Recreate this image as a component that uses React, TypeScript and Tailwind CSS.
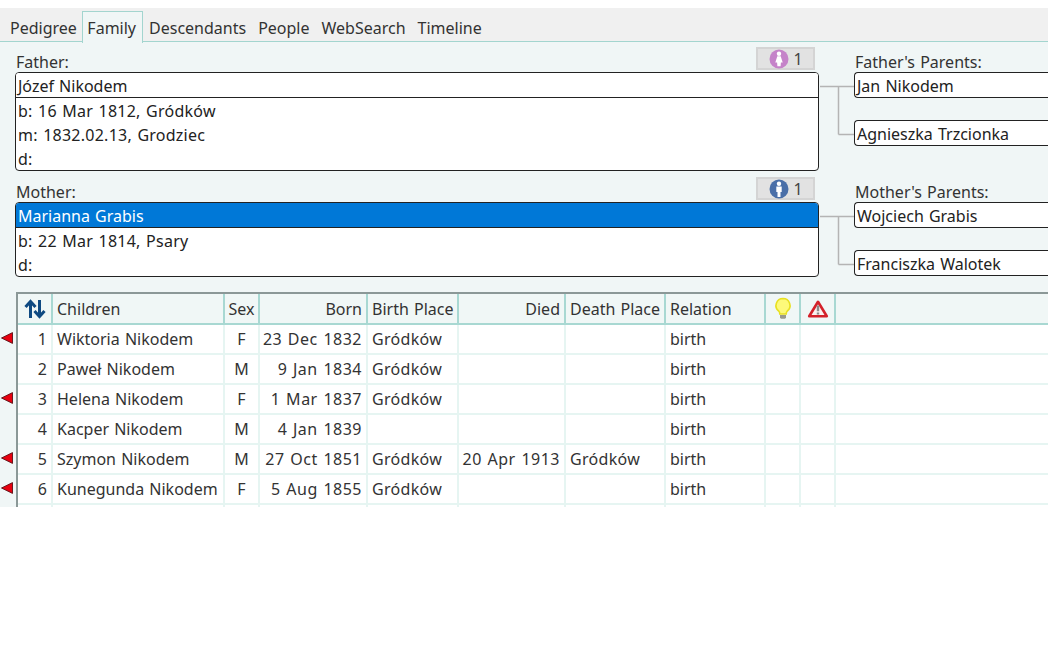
const tabs = ["Pedigree", "Family", "Descendants", "People", "WebSearch", "Timeline"];

const columns = [
  { label: "Children", w: "w-[172px]", align: "text-left", cell: "" },
  { label: "Sex", w: "w-[35px]", align: "text-center", cell: "" },
  { label: "Born", w: "w-[108px]", align: "text-right", cell: "tracking-[0.5px]" },
  { label: "Birth Place", w: "w-[91px]", align: "text-left", cell: "tracking-[0.3px]" },
  { label: "Died", w: "w-[107px]", align: "text-right", cell: "tracking-[0.5px]" },
  { label: "Death Place", w: "w-[100px]", align: "text-left", cell: "tracking-[0.3px]" },
  { label: "Relation", w: "w-[100px]", align: "text-left", cell: "" },
];

const rows = [
  { n: 1, flag: true, cells: ["Wiktoria Nikodem", "F", "23 Dec 1832", "Gródków", "", "", "birth"] },
  { n: 2, flag: false, cells: ["Paweł Nikodem", "M", "9 Jan 1834", "Gródków", "", "", "birth"] },
  { n: 3, flag: true, cells: ["Helena Nikodem", "F", "1 Mar 1837", "Gródków", "", "", "birth"] },
  { n: 4, flag: false, cells: ["Kacper Nikodem", "M", "4 Jan 1839", "", "", "", "birth"] },
  { n: 5, flag: true, cells: ["Szymon Nikodem", "M", "27 Oct 1851", "Gródków", "20 Apr 1913", "Gródków", "birth"] },
  { n: 6, flag: true, cells: ["Kunegunda Nikodem", "F", "5 Aug 1855", "Gródków", "", "", "birth"] },
  { n: 0, flag: false, cells: ["", "", "", "", "", "", ""] },
];

function Person({ color }: { color: string }) {
  return (
    <svg width="20" height="20" viewBox="0 0 20 20">
      <circle cx="10" cy="10" r="9.5" fill={color} />
      <circle cx="10" cy="4.8" r="2.200" fill="#fff" />
      {color === "#c583c9" ? (
        <path d="M8.300 7.200h3.400l2 6.300h-1.800l-.3 3.800H8.400l-.3-3.800H6.300z" fill="#fff" />
      ) : (
        <path d="M7.300 7.400h5.400v5.600h-1.200v5H8.500v-5H7.300z" fill="#fff" />
      )}
    </svg>
  );
}

function Badge({ color }: { color: string }) {
  return (
    <div className="flex h-[23px] w-[59px] -translate-x-px items-center justify-center gap-[5px] border-2 border-[#d4d4d4] bg-[#e2e2e2] text-[#444]">
      <Person color={color} />
      <span className="w-[9px]">1</span>
    </div>
  );
}

function Connector({ h }: { h: number }) {
  return (
    <svg width="36" height={h + 16} className="mt-[6px] shrink-0">
      <path d={`M1 8.500H36M19.500 8.500V${h + 8.5}M19.500 ${h + 8.5}H36`} fill="none" stroke="#b4b4b4" strokeWidth="1.500" />
    </svg>
  );
}

function ParentBox({ name }: { name: string }) {
  return (
    <div className="flex h-[26px] items-center rounded-l-[4px] border border-r-0 border-[#222] bg-white pl-[2px] pt-[2px] text-[#222]">
      {name}
    </div>
  );
}

function Family({
  label, parentsLabel, name, selected, lines, badge, boxGap, top, gapH,
}: {
  label: string; parentsLabel: string; name: string; selected?: boolean; lines: string[]; badge: string; boxGap: string; top: string; gapH: number;
}) {
  return (
    <section className={`flex ${top}`}>
      <div className="w-[804px] shrink-0">
        <div className="flex h-[25px] items-start justify-between pr-[3px]">
          <span className="mt-[5px] pl-px leading-[20px] text-[#333]">{label}</span>
          <Badge color={badge} />
        </div>
        <div className="overflow-hidden rounded-[4px] border border-[#222] bg-white text-[#222]">
          <div className={`flex h-[25px] items-center border-b border-[#222] pl-[2px] pt-[2px] ${selected ? "bg-[#0078d7] text-white" : "bg-white"}`}>
            {name}
          </div>
          {lines.map((l) => (
            <div key={l} className="flex h-[24px] items-center pl-[2px] pt-[2px] tracking-[0.25px]">{l}</div>
          ))}
        </div>
      </div>
      <div className="mt-[25px] shrink-0"><Connector h={gapH} /></div>
      <div className="w-[194px] shrink-0 -translate-x-px">
        <div className="mt-[5px] h-[20px] pl-px leading-[20px] text-[#333]">{parentsLabel}</div>
        <ParentBox name={name === "Józef Nikodem" ? "Jan Nikodem" : "Wojciech Grabis"} />
        <div className={boxGap}>
          <ParentBox name={name === "Józef Nikodem" ? "Agnieszka Trzcionka" : "Franciszka Walotek"} />
        </div>
      </div>
    </section>
  );
}

function Cell({ className, children }: { className: string; children?: React.ReactNode }) {
  return <div className={`flex shrink-0 items-center overflow-hidden whitespace-nowrap px-[4px] ${className}`}>{children}</div>;
}

export default function App() {
  return (
    <div className="h-[648px] w-[1048px] overflow-hidden bg-white pt-[8px] text-[16px] text-[#333] [font-family:'Noto_Sans','Open_Sans',sans-serif] [word-spacing:1px]">
      <nav className="flex h-[34px] items-end gap-[2px] border-b-[1.500px] border-[#a3d5cf] bg-[#f0f0f0] pl-[5px]">
        {tabs.map((t) => (
          <div
            key={t}
            className={
              t === "Family"
                ? "relative top-[1.500px] -ml-[1.500px] -mr-[1px] flex h-[32px] items-center border-[1.500px] border-b-0 border-[#a3d5cf] bg-[#f0f6f6] pl-[4px] pr-[6px] pt-[2px]"
                : "flex h-[30px] items-center px-[5px] pt-[4px]"
            }
          >
            {t}
          </div>
        ))}
      </nav>
      <main className="h-[465px] overflow-hidden bg-[#f0f6f6] pl-[15px]">
        <Family
          top="pt-[5px]"
          label="Father:"
          parentsLabel="Father's Parents:"
          name="Józef Nikodem"
          lines={["b: 16 Mar 1812, Gródków", "m: 1832.02.13, Grodziec", "d:"]}
          badge="#c583c9"
          boxGap="mt-[22px]"
          gapH={48}
        />
        <Family
          top="pt-[6px]"
          label="Mother:"
          parentsLabel="Mother's Parents:"
          name="Marianna Grabis"
          selected
          lines={["b: 22 Mar 1814, Psary", "d:"]}
          badge="#4a6fa8"
          boxGap="mt-[22px]"
          gapH={48}
        />
        <div className="-ml-[15px] mt-[15px] flex">
          <div className="w-[16px] shrink-0 pt-[31px]">
            {rows.map((r) => (
              <div key={r.n} className="flex h-[30px] items-center">
                {r.flag && (
                  <svg width="14" height="12" viewBox="0 0 14 12">
                    <path d="M1.500 6 12.500.6v10.800z" fill="#e8000f" stroke="#5a1015" strokeWidth="0.900" />
                  </svg>
                )}
              </div>
            ))}
          </div>
          <div className="w-[1032px] shrink-0 border-l-2 border-t-2 border-[#8b9897] text-[#333]">
            <div className="flex h-[31px] border-b-2 border-[#a8d8d2] bg-[#f0f7f6]">
              <Cell className="w-[35px] justify-center border-r-2 border-[#a8d8d2] px-0">
                <svg width="22" height="20" viewBox="0 0 22 20" fill="none" stroke="#0f4a82" strokeWidth="3">
                  <path d="M6.500 19V3M1.500 8 6.500 2.500 11.500 8M15.500 1v16M10.500 12l5 5.500 5-5.500" />
                </svg>
              </Cell>
              {columns.map((c) => (
                <Cell key={c.label} className={`${c.w} border-r-2 border-[#a8d8d2] ${c.align === "text-right" ? "justify-end" : c.align === "text-center" ? "justify-center" : ""}`}>
                  {c.label}
                </Cell>
              ))}
              <Cell className="w-[35px] justify-center border-r-2 border-[#a8d8d2] px-0">
                <svg width="20" height="24" viewBox="0 0 20 24">
                  <path d="M10 1.500a7 7 0 0 0-4.300 12.500c.9.800 1.100 2 1.100 3h6.400c0-1 .2-2.200 1.100-3A7 7 0 0 0 10 1.500z" fill="#fdf97a" stroke="#e8e020" strokeWidth="1.600" />
                  <path d="M7 18h6v2.800l-1 1H8l-1-1z" fill="#9a9a8c" />
                </svg>
              </Cell>
              <Cell className="w-[35px] justify-center border-r-2 border-[#a8d8d2] px-0">
                <svg width="22" height="20" viewBox="0 0 22 20">
                  <path d="M11 2.800 19.800 17.200H2.200z" fill="#fbf1ef" stroke="#d4212a" strokeWidth="2.600" strokeLinejoin="round" />
                  <path d="M11 6.500v5.800M11 13.400v2.200" stroke="#8a8a8a" strokeWidth="2.400" />
                </svg>
              </Cell>
            </div>
            {rows.map((r) => (
              <div key={r.n} className="flex h-[30px] border-b-2 border-[#e6f5f2] bg-white">
                <Cell className="w-[35px] justify-end border-r-2 border-[#e6f5f2]">{r.n || ""}</Cell>
                {columns.map((c, i) => (
                  <Cell key={c.label} className={`${c.w} border-r-2 border-[#e6f5f2] ${c.cell} ${c.align === "text-right" ? "justify-end" : c.align === "text-center" ? "justify-center" : ""}`}>
                    {r.cells[i]}
                  </Cell>
                ))}
                <Cell className="w-[35px] border-r-2 border-[#e6f5f2]" />
                <Cell className="w-[35px] border-r-2 border-[#e6f5f2]" />
              </div>
            ))}
          </div>
        </div>
      </main>
    </div>
  );
}
